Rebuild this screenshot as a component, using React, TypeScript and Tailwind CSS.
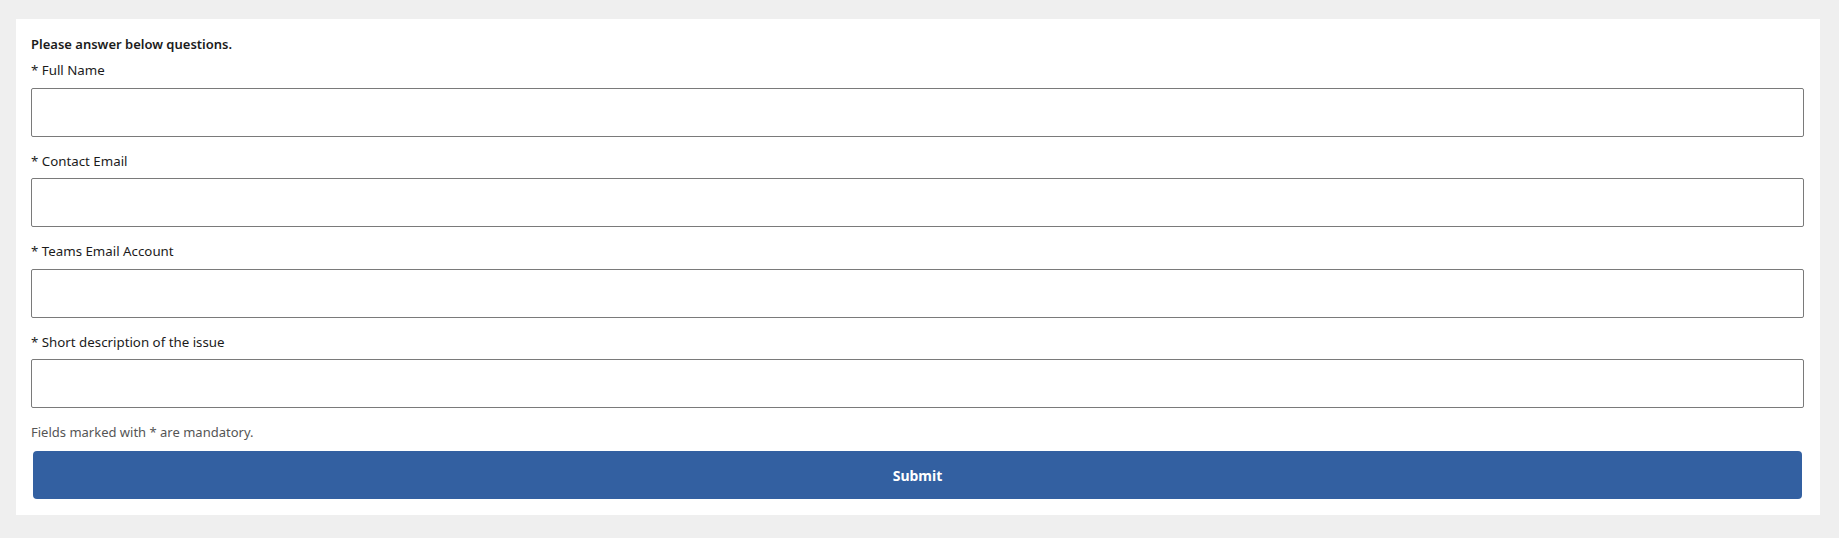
import React from "react";

const fields = [
  "Full Name",
  "Contact Email",
  "Teams Email Account",
  "Short description of the issue",
];

export default function App() {
  return (
    <div
      className="min-h-screen bg-[#efefef] pt-[19px] pl-4 pr-[19px]"
      style={{ fontFamily: '"Segoe UI", "Noto Sans", "Open Sans", sans-serif' }}
    >
      <form
        onSubmit={(e) => e.preventDefault()}
        className="bg-white pt-[15px] pb-[16px] pl-[15px] pr-4"
      >
        <p className="text-[13px] leading-5 font-semibold text-[#1b1b1b]">
          Please answer below questions.
        </p>

        <div className="mt-[6px] flex flex-col gap-[14px]">
          {fields.map((label) => (
            <div key={label} className="flex flex-col">
              <label className="text-[13.3px] leading-5 text-[#1b1b1b] mb-[7.5px]">
                * {label}
              </label>
              <input
                type="text"
                className="h-[49px] w-full rounded-[2px] border border-[#7a7a7a] bg-white px-3 text-sm outline-none"
              />
            </div>
          ))}
        </div>

        <p className="mt-[14px] text-[13px] leading-5 text-[#555]">
          Fields marked with * are mandatory.
        </p>

        <div className="mt-[9px] px-[2px]">
          <button
            type="submit"
            className="h-[48px] w-full rounded-[4px] bg-[#3360a1] text-[14px] font-bold text-white"
          >
            Submit
          </button>
        </div>
      </form>
    </div>
  );
}
